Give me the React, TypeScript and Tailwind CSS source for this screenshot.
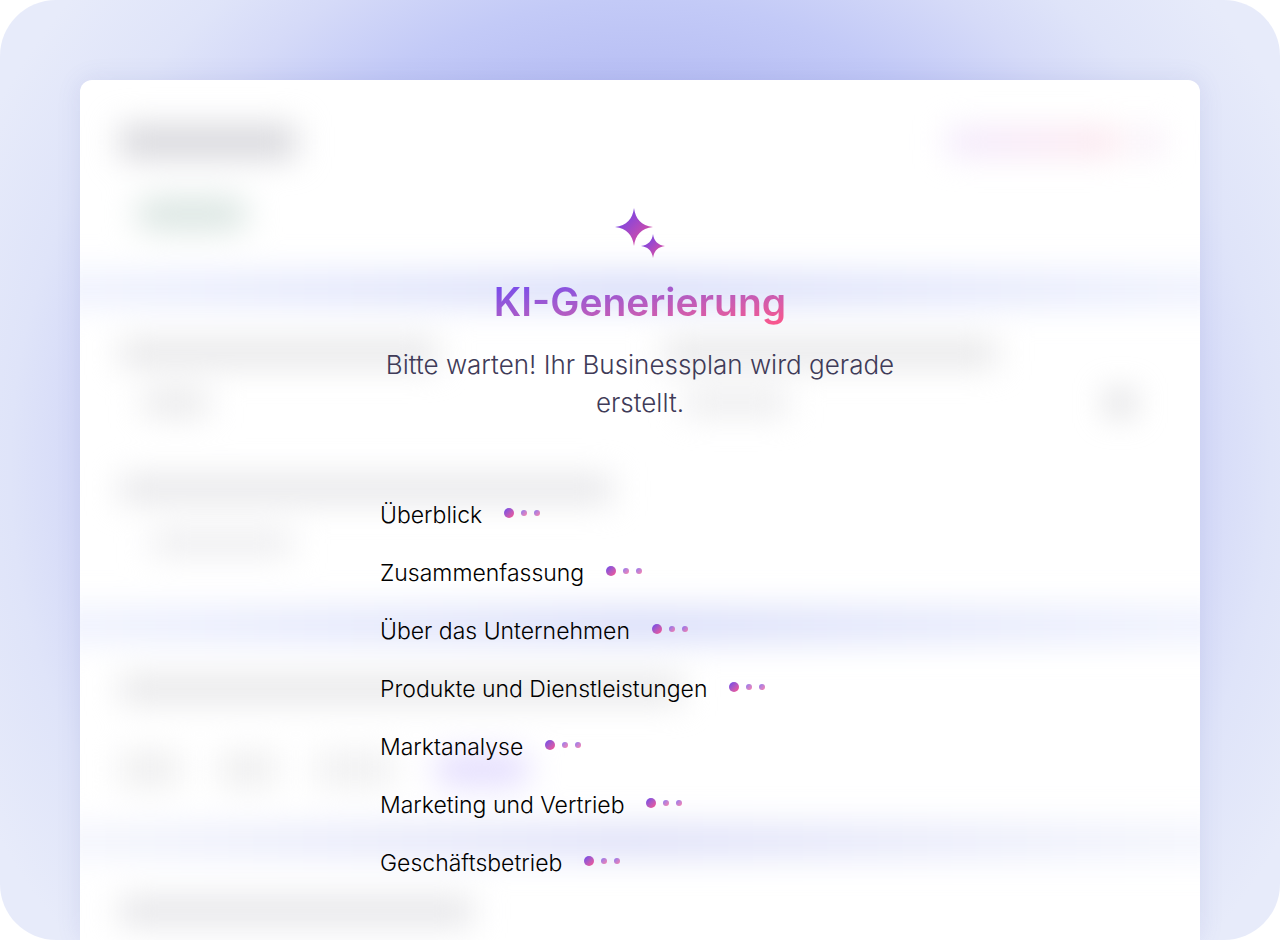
import React from "react";

const SECTIONS = [
  "Überblick",
  "Zusammenfassung",
  "Über das Unternehmen",
  "Produkte und Dienstleistungen",
  "Marktanalyse",
  "Marketing und Vertrieb",
  "Geschäftsbetrieb",
];

function SparkleIcon() {
  return (
    <svg width="50" height="50" viewBox="0 0 50 50" aria-hidden="true">
      <defs>
        <linearGradient id="sparkle-lg" x1="0" y1="0" x2="1" y2="1">
          <stop offset="0.1" stopColor="#6a43ee" />
          <stop offset="0.95" stopColor="#ec4f97" />
        </linearGradient>
      </defs>
      <path
        fill="url(#sparkle-lg)"
        d="M19 0C20.6 11 26 17.6 38 19C26 20.4 20.6 27 19 38C17.4 27 12 20.4 0 19C12 17.6 17.4 11 19 0Z"
      />
      <path
        fill="url(#sparkle-lg)"
        d="M38 26C39 33 42.6 37 50 38C42.6 39 39 43 38 50C37 43 33.4 39 26 38C33.4 37 37 33 38 26Z"
      />
    </svg>
  );
}

function LoadingDots() {
  return (
    <span className="mb-1 flex items-center gap-[7px]" aria-hidden="true">
      <span className="size-[10px] rounded-full bg-linear-135 from-[#6a43ee] to-[#ff4f8b]" />
      <span className="size-[6px] rounded-full bg-linear-135 from-[#6a43ee] to-[#ff4f8b] opacity-75" />
      <span className="size-[6px] rounded-full bg-linear-135 from-[#6a43ee] to-[#ff4f8b] opacity-75" />
    </span>
  );
}

function Band({ soft = false }: { soft?: boolean }) {
  return (
    <div
      className={`-mx-19 h-8 bg-linear-to-r ${soft ? "from-[#f4f6fd] via-[#dcdef8] to-[#f4f6fd]" : "from-[#eff2fe] via-[#d5daf9] to-[#eff2fe]"}`}
    />
  );
}

// Form placeholder that sits out of focus behind the overlay
function BlurredForm() {
  return (
    <div
      className="col-start-1 row-start-1 px-10 blur-lg"
      aria-hidden="true"
    >
      <div className="pt-[46px] pb-[43px]">
        <div className="flex items-center justify-between">
          <div className="h-8 w-[176px] bg-[#d5d5da]" />
          <div className="flex gap-4">
            <div className="h-6 w-[172px] bg-linear-to-r from-[#f0e4fc] to-[#fce2ea]" />
            <div className="h-6 w-6 bg-[#f5e8f6]" />
          </div>
        </div>
        <div className="mt-10 ml-4 h-8 w-[112px] rounded-full bg-[#d8e4e0]" />
      </div>

      <Band />

      <div className="pt-9 pb-14">
        <div className="grid grid-cols-2">
          <div>
            <div className="h-6 w-[318px] bg-[#e3e3e5]" />
            <div className="mt-7 ml-6 h-5 w-16 bg-[#e2e2e4]" />
          </div>
          <div className="pl-6">
            <div className="h-6 w-[332px] bg-[#e3e3e5]" />
            <div className="mt-7 flex justify-between pr-7 pl-5">
              <div className="h-5 w-26 bg-[#e7e7e9]" />
              <div className="h-5 w-6 bg-[#cacace]" />
            </div>
          </div>
        </div>
        <div className="mt-16 h-6 w-[492px] bg-[#e3e3e6]" />
        <div className="mt-8 ml-8 h-5 w-[140px] bg-[#e8e8eb]" />
      </div>

      <Band />

      <div className="pt-9 pb-10">
        <div className="h-6 w-[562px] bg-[#e3e3e5]" />
        <div className="mt-13 flex gap-10">
          <div className="h-8 w-[60px] bg-[#ededee]" />
          <div className="h-8 w-[56px] bg-[#ededee]" />
          <div className="h-8 w-[78px] bg-[#efeff0]" />
          <div className="h-8 w-[96px] rounded-full bg-[#e2dbfe]" />
        </div>
      </div>

      <Band soft />

      <div className="pt-[42px]">
        <div className="h-6 w-[352px] bg-[#e0e0e4]" />
      </div>
    </div>
  );
}

function GenerationOverlay() {
  return (
    <div className="relative col-start-1 row-start-1 mx-auto flex w-full max-w-[520px] flex-col items-center pt-32 pb-14">
      <SparkleIcon />
      <h1 className="mt-5 bg-linear-to-br from-[#6a43f5] to-[#ff5487] bg-clip-text text-[39px] leading-12 font-semibold text-transparent">
        KI-Generierung
      </h1>
      <p className="mt-5 text-center text-[26px] leading-[38px] font-light text-[#3f3b58]">
        Bitte warten! Ihr Businessplan wird gerade erstellt.
      </p>
      <ul className="mt-[75px] flex flex-col gap-[22px] self-stretch">
        {SECTIONS.map((name) => (
          <li
            key={name}
            className="flex items-center gap-[22px] text-[23px] leading-9 font-light text-black"
          >
            {name}
            <LoadingDots />
          </li>
        ))}
      </ul>
    </div>
  );
}

export default function App() {
  return (
    <div className="flex min-h-screen rounded-[56px] bg-[radial-gradient(circle_at_center,#aab2f2_300px,#b8bff4_390px,#c3caf7_470px,#d5daf8_560px,#dfe4f9_630px,#e7ebfa_740px)] px-20 pt-20 font-['Inter',sans-serif]">
      <main className="grid w-full overflow-hidden rounded-t-xl bg-white shadow-[0_0_24px_rgba(90,100,180,0.12)]">
        <BlurredForm />
        <GenerationOverlay />
      </main>
    </div>
  );
}
